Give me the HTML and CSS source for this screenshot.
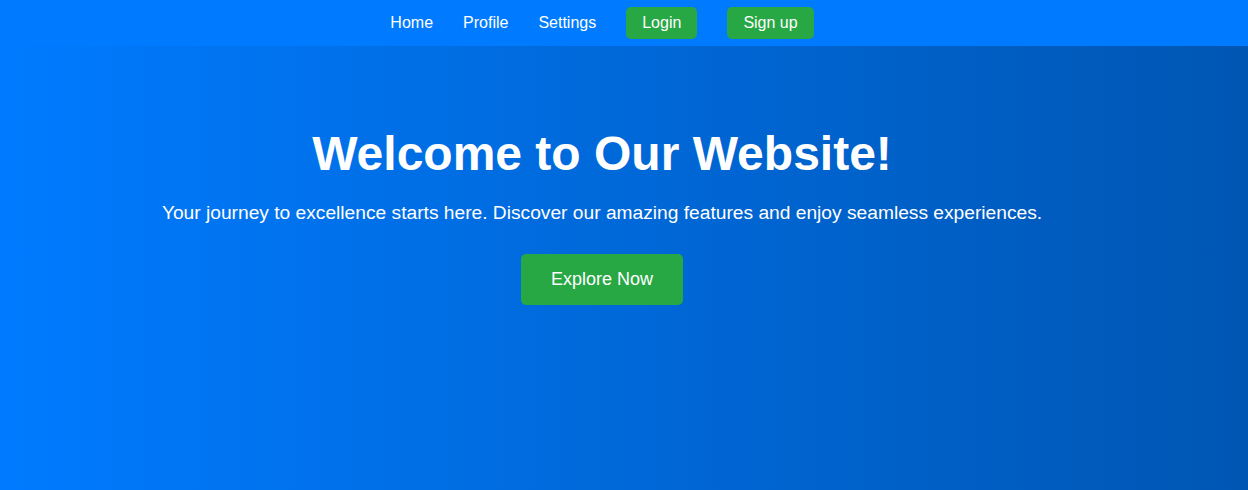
FILE: index.html
```html
<!DOCTYPE html>
<html lang="en">
<head>
<meta charset="utf-8">
<title>Welcome</title>
<link rel="stylesheet" href="styles.css">
</head>
<body>
<nav class="navbar">
  <div class="nav-inner">
    <a class="nav-link" href="#">Home</a>
    <a class="nav-link" href="#">Profile</a>
    <a class="nav-link" href="#">Settings</a>
    <a class="nav-btn" href="#">Login</a>
    <a class="nav-btn" href="#">Sign up</a>
  </div>
</nav>
<section class="hero">
  <div class="hero-inner">
    <h1 class="hero-title">Welcome to Our Website!</h1>
    <p class="hero-sub">Your journey to excellence starts here. Discover our amazing features and enjoy seamless experiences.</p>
    <a class="hero-btn" href="#">Explore Now</a>
  </div>
</section>
</body>
</html>
```
FILE: styles.css
```css
* { box-sizing: border-box; }
html, body { margin: 0; padding: 0; height: 100%; }
body {
  font-family: "Liberation Sans", Arial, sans-serif;
  color: #fff;
  background: linear-gradient(to right, #007bff, #0056b3);
  display: flex;
  flex-direction: column;
}
.navbar {
  background: #007bff;
  height: 46px;
  flex: none;
}
.nav-inner {
  display: flex;
  justify-content: center;
  align-items: center;
  gap: 30px;
  height: 100%;
  padding-right: 44px;
}
.nav-link {
  color: #fff;
  text-decoration: none;
  font-size: 16px;
}
.nav-btn {
  color: #fff;
  text-decoration: none;
  font-size: 16px;
  background: #28a745;
  padding: 7px 16px;
  border-radius: 5px;
  line-height: 18px;
  margin-top: -1px;
}
.hero {
  flex: 1;
}
.hero-inner {
  display: flex;
  flex-direction: column;
  align-items: center;
  text-align: center;
  padding: 80px 44px 0 0;
}
.hero-title {
  margin: 0;
  font-size: 48px;
  font-weight: bold;
  line-height: 56px;
}
.hero-sub {
  margin: 20px 0 0;
  font-size: 19.2px;
  line-height: 22px;
}
.hero-btn {
  margin-top: 30px;
  background: #28a745;
  color: #fff;
  text-decoration: none;
  font-size: 18px;
  line-height: 21px;
  padding: 15px 30px;
  border-radius: 5px;
}
```
